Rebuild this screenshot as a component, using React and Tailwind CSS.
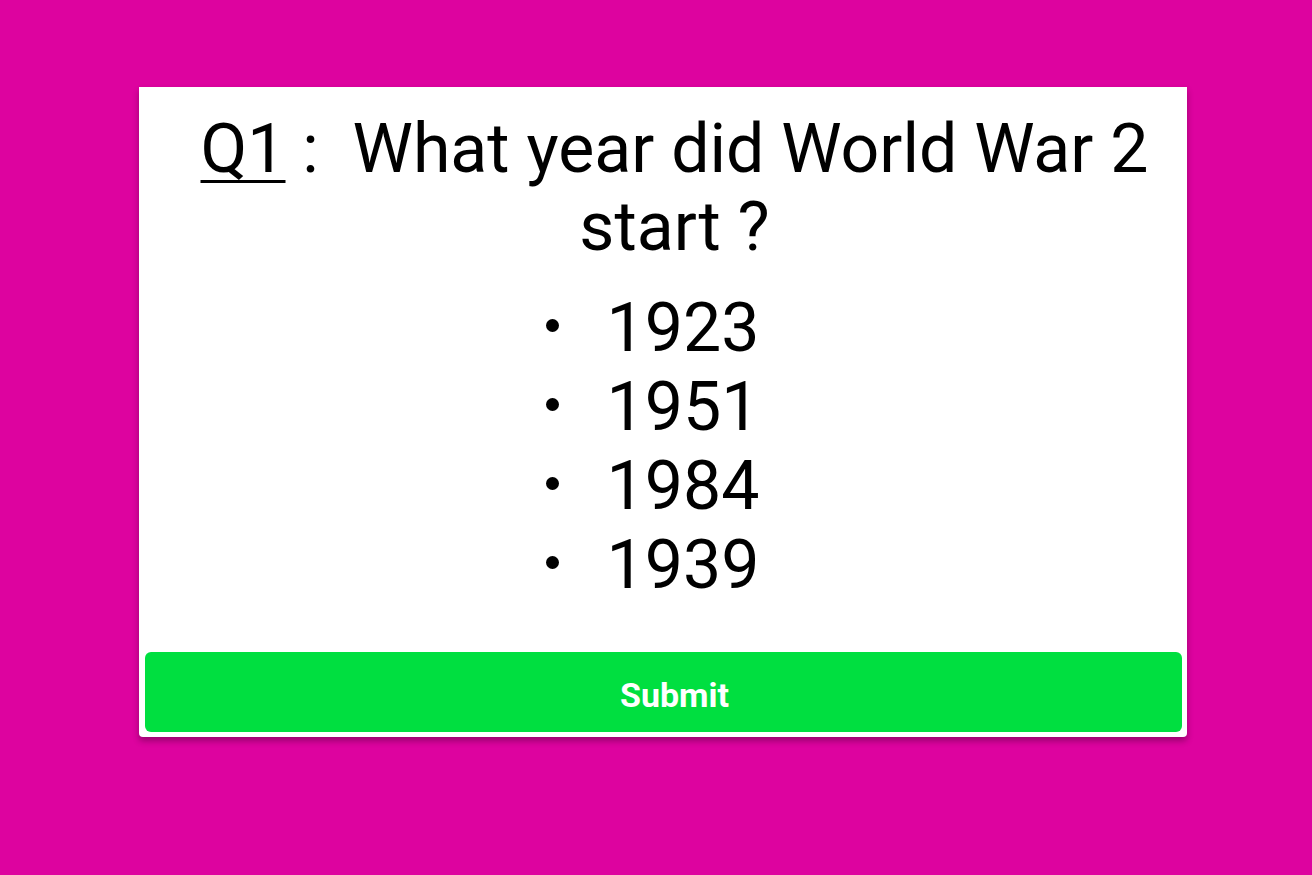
import React from "react";

const options = ["1923", "1951", "1984", "1939"];

const App = () => {
  return (
    <div
      className="min-h-[875px] w-full bg-[#dd039f] pt-[87px]"
      style={{ fontFamily: "Roboto, 'Liberation Sans', sans-serif" }}
    >
      <div className="ml-[139px] w-[1048px] rounded-b-[4px] bg-white shadow-[0_4px_6px_rgba(0,0,0,0.3)] pt-[23px] pb-[5px] pl-[6px] pr-[5px]">
        {/* Question */}
        <h1 className="pl-[22px] text-center text-[68px] leading-[78px] font-normal text-black">
          <span className="underline underline-offset-[8px] decoration-[3px]">Q1</span>
          {" :\u00a0 What year did World War 2 start ?"}
        </h1>

        {/* Options */}
        <div className="mt-[23px] flex justify-center pr-[22px]">
          <ul className="flex flex-col">
            {options.map((opt) => (
              <li
                key={opt}
                className="flex items-start text-[68px] leading-[79px] text-black"
              >
                <span className="mt-[30px] mr-[48px] h-[13px] w-[13px] shrink-0 rounded-full bg-black" />
                <span>{opt}</span>
              </li>
            ))}
          </ul>
        </div>

        {/* Submit */}
        <button className="mt-[47px] flex h-[80px] w-full items-center justify-center rounded-[6px] bg-[#00df40] pl-[22px] pt-[6px] text-[34px] font-bold text-white">
          Submit
        </button>
      </div>
    </div>
  );
};

export default App;
